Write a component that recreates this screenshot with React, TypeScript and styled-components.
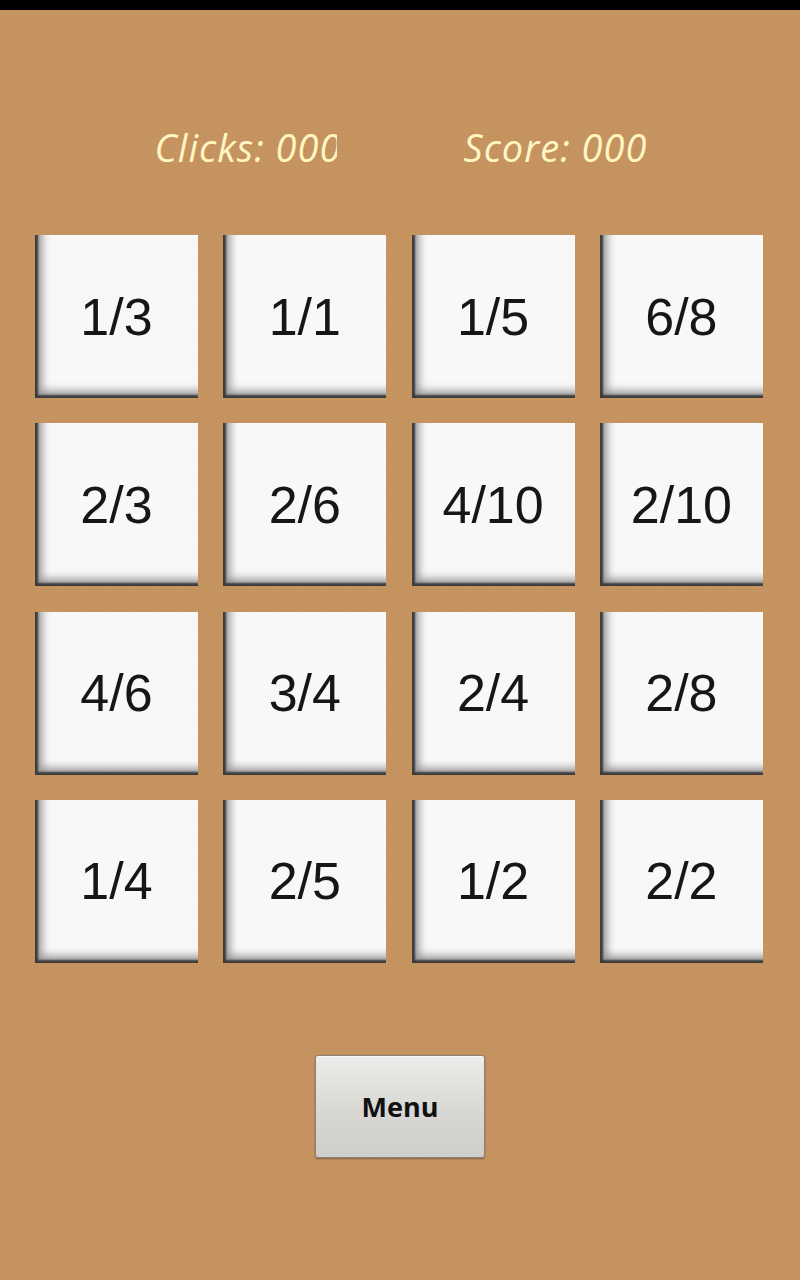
import React from "react";
import styled, { createGlobalStyle } from "styled-components";

const Global = createGlobalStyle`
  html, body { margin: 0; padding: 0; }
  body { background: #c69461; }
  #root { min-height: 1280px; }
`;

const Screen = styled.div`
  width: 800px;
  height: 1280px;
  display: flex;
  flex-direction: column;
  background-color: #c69461;
  background-image:
    radial-gradient(rgba(180, 130, 80, 0.35) 0.8px, transparent 1px);
  background-size: 3px 3px;
  overflow: hidden;
`;

const StatusBar = styled.div`
  height: 10px;
  background: #000;
  flex: none;
`;

const Header = styled.div`
  display: flex;
  justify-content: center;
  gap: 127px;
  padding-top: 112px;
  height: 64px;
`;

const Stat = styled.div`
  width: 182px;
  overflow: hidden;
  white-space: nowrap;
  font-family: "Open Sans", "DejaVu Sans", sans-serif;
  font-style: italic;
  font-size: 38px;
  letter-spacing: 1px;
  line-height: 50px;
  color: #fff6c2;
`;

const Grid = styled.div`
  display: grid;
  grid-template-columns: repeat(4, 163px);
  grid-auto-rows: 163px;
  column-gap: 25.3px;
  row-gap: 25.3px;
  padding-left: 35px;
  margin-top: 49px;
`;

const Tile = styled.div`
  background: #f8f8f8;
  display: flex;
  align-items: center;
  justify-content: center;
  font-family: "Liberation Sans", Arial, sans-serif;
  font-size: 52px;
  color: #161616;
  box-shadow:
    inset 3px -3px 2px rgba(20, 20, 20, 0.7),
    inset 10px -10px 9px -3px rgba(0, 0, 0, 0.4);
`;

const Footer = styled.div`
  display: flex;
  justify-content: center;
  margin-top: 92px;
`;

const MenuButton = styled.button`
  width: 170px;
  height: 103px;
  border: 1px solid #8a8278;
  border-radius: 3px;
  background: linear-gradient(#ececea, #d8d7d3 55%, #cfceca);
  box-shadow: 0 1px 2px rgba(0, 0, 0, 0.35), inset 0 1px 0 #f6f6f4;
  font-family: "Open Sans", "DejaVu Sans", sans-serif;
  font-weight: 700;
  font-size: 27px;
  color: #111;
  padding: 0;
`;

const tiles = [
  "1/3", "1/1", "1/5", "6/8",
  "2/3", "2/6", "4/10", "2/10",
  "4/6", "3/4", "2/4", "2/8",
  "1/4", "2/5", "1/2", "2/2",
];

export default function App() {
  return (
    <>
      <Global />
      <Screen>
        <StatusBar />
        <Header>
          <Stat>Clicks: 000</Stat>
          <Stat>Score: 000</Stat>
        </Header>
        <Grid>
          {tiles.map((t, i) => (
            <Tile key={i}>{t}</Tile>
          ))}
        </Grid>
        <Footer>
          <MenuButton>Menu</MenuButton>
        </Footer>
      </Screen>
    </>
  );
}
